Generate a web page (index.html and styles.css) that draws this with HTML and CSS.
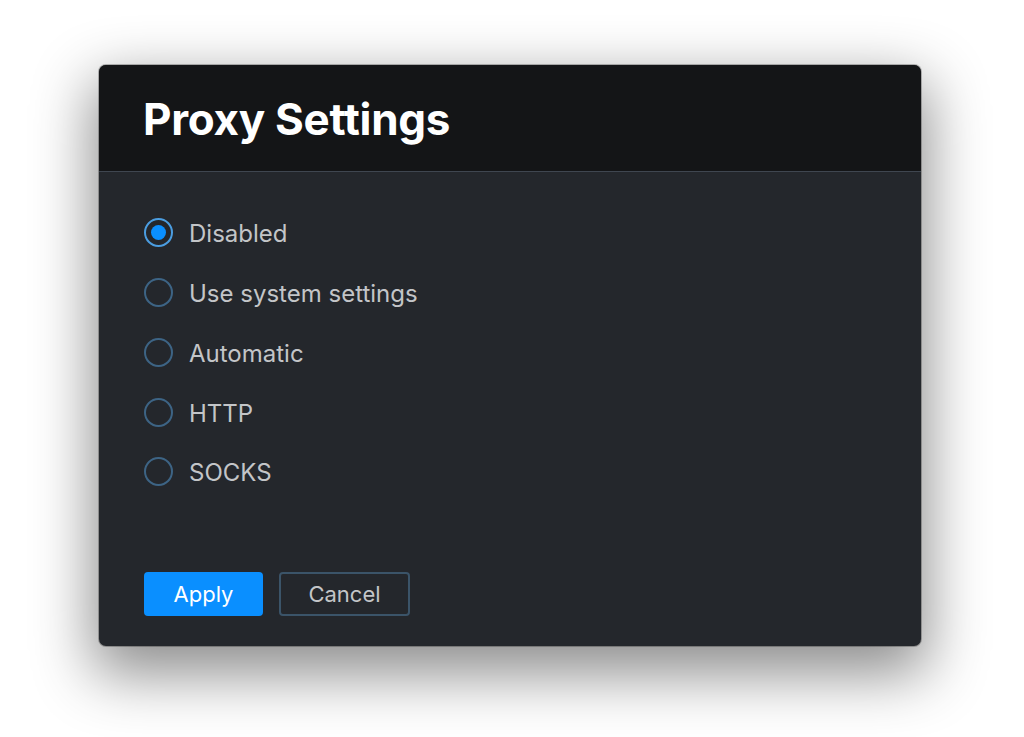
FILE: index.html
```html
<!DOCTYPE html>
<html>
<head>
<meta charset="utf-8">
<link rel="stylesheet" href="styles.css">
</head>
<body>
<div class="stage">
  <div class="dialog">
    <div class="header"><h1 class="title">Proxy Settings</h1></div>
    <div class="content">
      <ul class="options">
        <li class="option"><span class="radio checked"></span><span class="label">Disabled</span></li>
        <li class="option"><span class="radio"></span><span class="label">Use system settings</span></li>
        <li class="option"><span class="radio"></span><span class="label">Automatic</span></li>
        <li class="option"><span class="radio"></span><span class="label">HTTP</span></li>
        <li class="option"><span class="radio"></span><span class="label">SOCKS</span></li>
      </ul>
      <div class="actions">
        <button class="btn primary">Apply</button>
        <button class="btn secondary">Cancel</button>
      </div>
    </div>
  </div>
</div>
</body>
</html>
```
FILE: styles.css
```css
html, body {
  margin: 0;
  padding: 0;
  background: #ffffff;
  width: 1024px;
  height: 737px;
  overflow: hidden;
  font-family: Inter, "Noto Sans", sans-serif;
}
.stage {
  padding: 65px 0 0 99px;
}
.dialog {
  width: 822px;
  height: 581px;
  border-radius: 7px;
  background: #24272c;
  box-shadow: 0 22px 60px 6px rgba(0,0,0,0.45), 0 0 0 1px rgba(0,0,0,0.25);
  overflow: hidden;
  display: flex;
  flex-direction: column;
}
.header {
  height: 107px;
  flex: none;
  background: #141517;
  border-bottom: 1px solid #3f4650;
  display: flex;
  align-items: center;
  padding-left: 44px;
  box-sizing: border-box;
}
.title {
  margin: 0;
  color: #ffffff;
  font-size: 44px;
  font-weight: 700;
  letter-spacing: -0.3px;
  padding-top: 2px;
}
.content {
  flex: 1;
  display: flex;
  flex-direction: column;
  padding: 31px 45px 30px;
}
.options {
  list-style: none;
  margin: 0;
  padding: 0;
  flex: 1;
}
.option {
  height: 59.75px;
  display: flex;
  align-items: center;
  gap: 16px;
}
.radio {
  width: 29px;
  height: 29px;
  box-sizing: border-box;
  border: 2px solid #3d6485;
  border-radius: 50%;
  display: flex;
  align-items: center;
  justify-content: center;
  flex: none;
}
.radio.checked {
  border-color: #4b9de0;
}
.radio.checked::after {
  content: "";
  width: 15px;
  height: 15px;
  border-radius: 50%;
  background: #0a8fff;
}
.label {
  color: #c3c5c8;
  font-size: 24px;
  padding-top: 2px;
}
.actions {
  display: flex;
  gap: 16px;
}
.btn {
  height: 44px;
  border-radius: 4px;
  font-family: Inter, "Noto Sans", sans-serif;
  font-size: 22px;
  box-sizing: border-box;
  padding: 0;
}
.primary {
  width: 119px;
  background: #0a8fff;
  border: none;
  color: #ffffff;
}
.secondary {
  width: 131px;
  background: transparent;
  border: 2px solid #3b5469;
  color: #c3c5c8;
}
```
